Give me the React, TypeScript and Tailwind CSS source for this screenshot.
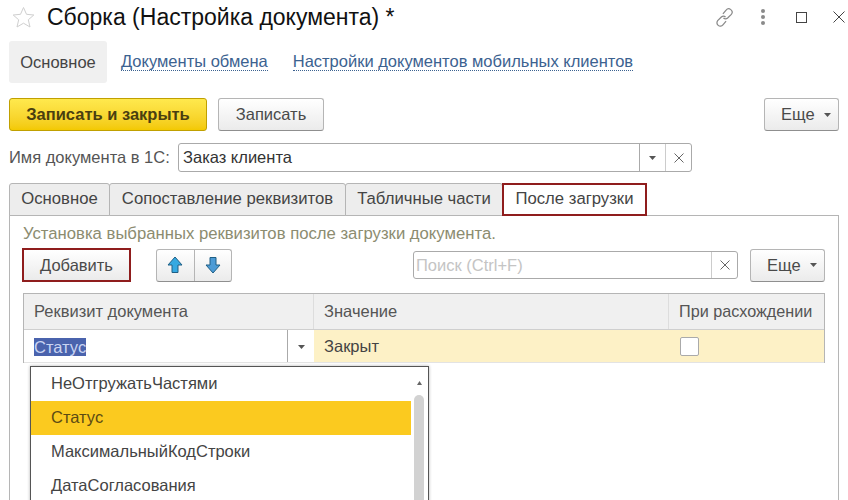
const font = "font-['Liberation_Sans',Arial,sans-serif]";

const raisedBtn = 'flex items-center justify-center rounded-[3px] border border-[#b5b5b5] border-b-[#8f8f8f] bg-gradient-to-b from-white to-[#ebebeb] text-[#4a4a4a]';

function Caret({ className = '' }: { className?: string }) {
  return (
    <svg width="7" height="4" viewBox="0 0 7 4" className={className}>
      <path d="M0 0h7L3.5 4z" fill="#555" />
    </svg>
  );
}

function Cross({ size = 10 }: { size?: number }) {
  return (
    <svg width={size} height={size} viewBox="0 0 10 10">
      <path d="M.5.5l9 9M9.500.5l-9 9" stroke="#666" strokeWidth="1" fill="none" />
    </svg>
  );
}

function MoreButton({ className = '' }: { className?: string }) {
  return (
    <div className={`${raisedBtn} !justify-start w-[75px] h-[33px] gap-[9px] pl-[16px] text-[16.5px] ${className}`}>
      <span>Еще</span>
      <Caret />
    </div>
  );
}

function ArrowIcon({ down = false, color }: { down?: boolean; color: string }) {
  return (
    <svg width="16" height="18" viewBox="0 0 16 18" className={down ? 'rotate-180' : ''}>
      <path d="M8 1L15 9H11V16.500H5V9H1z" fill={color} stroke="#1f5f85" strokeWidth="1" strokeLinejoin="round" />
    </svg>
  );
}

const tabs = [
  { label: 'Основное', width: 'w-[101px]' },
  { label: 'Сопоставление реквизитов', width: 'w-[237px]' },
  { label: 'Табличные части', width: 'w-[158px]' },
];

const options = ['НеОтгружатьЧастями', 'Статус', 'МаксимальныйКодСтроки', 'ДатаСогласования'];

export default function App() {
  return (
    <div className={`${font} relative w-[848px] h-[500px] overflow-hidden bg-white text-[16.5px]`}>
      {/* Title bar */}
      <div className="flex items-center h-[34px] pl-[12px] pr-[3px]">
        <svg width="23" height="22" viewBox="0 0 23 22">
          <path d="M11.500 1.500l3 6.800 7.300.7-5.500 4.800 1.700 7.200-6.500-3.800L5 21l1.700-7.200L1.200 9l7.300-.7z" fill="#fff" stroke="#cfcfcf" strokeWidth="1" />
        </svg>
        <h1 className="ml-[12px] text-[23px] leading-[34px] text-[#111]">Сборка (Настройка документа) *</h1>
        <div className="ml-auto flex items-center">
          <svg width="21" height="21" viewBox="0 0 20 20" fill="none" stroke="#8a8a8a" strokeWidth="1.200">
            <path d="M8.500 6.500l3-3.500a3 3 0 0 1 5 4l-3.500 3.500a3 3 0 0 1-4 0" />
            <path d="M11.500 13.500l-3 3.500a3 3 0 0 1-5-4l3.500-3.500a3 3 0 0 1 4 0" />
          </svg>
          <div className="ml-[26px] flex flex-col gap-[2px]">
            <span className="w-[4px] h-[4px] rounded-full bg-[#8a8a8a]" />
            <span className="w-[4px] h-[4px] rounded-full bg-[#8a8a8a]" />
            <span className="w-[4px] h-[4px] rounded-full bg-[#8a8a8a]" />
          </div>
          <div className="ml-[31px] w-[11px] h-[11px] border border-[#444]" />
          <div className="ml-[26px]">
            <svg width="12" height="12" viewBox="0 0 12 12">
              <path d="M.5.5l11 11M11.500.5l-11 11" stroke="#444" strokeWidth="1" fill="none" />
            </svg>
          </div>
        </div>
      </div>

      {/* Section nav */}
      <div className="flex items-center h-[42px] mt-[7px] pl-[9px]">
        <div className="flex items-center justify-center w-[98px] h-[42px] rounded-[3px] bg-[#f0f0f0] text-[#444]">Основное</div>
        <a className="ml-[14px] text-[#3c6290] border-b border-dotted border-[#3c6290] leading-[17px]">Документы обмена</a>
        <a className="ml-[25px] text-[#3c6290] border-b border-dotted border-[#3c6290] leading-[17px]">Настройки документов мобильных клиентов</a>
      </div>

      {/* Command bar */}
      <div className="flex items-center mt-[15px] pl-[9px] pr-[9px]">
        <div className="flex items-center justify-center w-[198px] h-[33px] rounded-[3px] border border-[#c0a000] bg-gradient-to-b from-[#ffe94d] to-[#f3c900] font-bold text-[#4a3f10]">
          Записать и закрыть
        </div>
        <div className={`${raisedBtn} ml-[11px] w-[106px] h-[33px]`}>Записать</div>
        <MoreButton className="ml-auto" />
      </div>

      {/* Document name field */}
      <div className="flex items-center mt-[12px] pl-[9px] h-[29px]">
        <span className="w-[169px] text-[#555]">Имя документа в 1С:</span>
        <div className="flex items-stretch w-[514px] h-[29px] rounded-[3px] border border-[#aaa]">
          <span className="flex-1 pl-[4px] leading-[27px] text-[#333]">Заказ клиента</span>
          <div className="flex items-center justify-center w-[26px] border-l border-[#aaa]">
            <Caret />
          </div>
          <div className="flex items-center justify-center w-[26px] border-l border-[#ccc]">
            <Cross />
          </div>
        </div>
      </div>

      {/* Tabs */}
      <div className="relative z-10 flex mt-[11px] ml-[9px] h-[33px] text-[16.7px]">
        {tabs.map(tab => (
          <div key={tab.label} className={`${tab.width} flex items-center justify-center pb-[2px] -mr-px rounded-t-[3px] border border-[#b5b5b5] bg-[#ededed] text-[#444]`}>
            {tab.label}
          </div>
        ))}
        <div className="flex items-center justify-center w-[145px] pb-[2px] border-2 border-[#8f1d1d] bg-white text-[#444]">
          После загрузки
        </div>
      </div>

      {/* Tab page */}
      <div className="ml-[9px] mr-[9px] h-[286px] -mt-px border border-[#b5b5b5] px-[13px]">
        <p className="mt-[9px] leading-[18px] text-[16.7px] text-[#8c8c70]">Установка выбранных реквизитов после загрузки документа.</p>

        <div className="flex items-center mt-[5px] h-[34px]">
          <div className={`${raisedBtn} -ml-[1px] w-[109px] h-[34px] border-2 !border-[#8f1d1d] rounded-none`}>Добавить</div>
          <div className="flex ml-[25px] w-[76px] h-[33px] rounded-[3px] border border-[#b5b5b5] border-b-[#8f8f8f] bg-gradient-to-b from-white to-[#ebebeb]">
            <div className="flex flex-1 items-center justify-center border-r border-[#b5b5b5]">
              <ArrowIcon color="#36a9e1" />
            </div>
            <div className="flex flex-1 items-center justify-center">
              <ArrowIcon down color="#4c9bd6" />
            </div>
          </div>
          <div className="flex items-stretch ml-[181px] w-[325px] h-[28px] rounded-[3px] border border-[#aaa]">
            <span className="flex-1 pl-[2px] leading-[26px] text-[#c4c4c4]">Поиск (Ctrl+F)</span>
            <div className="flex items-center justify-center w-[26px] border-l border-[#ccc]">
              <Cross />
            </div>
          </div>
          <MoreButton className="ml-[12px]" />
        </div>

        {/* Table */}
        <div className="mt-[11px] border-x border-t border-[#b5b5b5]">
          <div className="flex h-[36px] bg-[#f0f0f0] border-b border-[#cfcfcf] text-[#555]">
            <div className="flex items-center w-[290px] pl-[10px] border-r border-[#ddd]">Реквизит документа</div>
            <div className="flex items-center w-[355px] pl-[10px] border-r border-[#ddd]">Значение</div>
            <div className="flex items-center flex-1 pl-[10px] text-[16.2px]">При расхождении</div>
          </div>
          <div className="flex h-[33px] border-b border-[#e3e3e3]">
            <div className="flex w-[290px] items-stretch">
              <div className="flex flex-1 items-center pl-[10px] pt-[1px] border-r border-[#aaa]">
                <span className="bg-[#4a63ad] leading-[18px] text-[#c9d4f2]">Статус</span>
              </div>
              <div className="flex items-center justify-center w-[26px] pt-[2px]">
                <Caret />
              </div>
            </div>
            <div className="flex items-center w-[355px] pl-[10px] pt-[1px] bg-[#fdf1c6] text-[#444]">Закрыт</div>
            <div className="flex items-center flex-1 pl-[11px] bg-[#fdf1c6]">
              <div className="w-[19px] h-[19px] rounded-[2px] border border-[#aaa] bg-white" />
            </div>
          </div>
        </div>
      </div>

      {/* Dropdown list */}
      <div className="absolute left-[30px] top-[366px] z-20 flex w-[399px] h-[150px] border border-[#555] bg-white shadow-[0_0_3px_rgba(0,0,0,0.3)]">
        <ul className="flex-1">
          {options.map(option => (
            <li
              key={option}
              className={`flex items-center h-[34px] pl-[20px] pb-[2px] ${option === 'Статус' ? 'bg-[#fbca1f] text-[#5b4a14]' : 'text-[#444]'}`}
            >
              {option}
            </li>
          ))}
        </ul>
        <div className="relative w-[17px]">
          <svg width="5" height="4" viewBox="0 0 5 4" className="absolute left-[6px] top-[14px]">
            <path d="M2.500 0L5 4H0z" fill="#666" />
          </svg>
          <div className="absolute left-[3px] top-[28px] w-[10px] h-[120px] rounded-[5px] bg-[#d2d2d2]" />
        </div>
      </div>
    </div>
  );
}
